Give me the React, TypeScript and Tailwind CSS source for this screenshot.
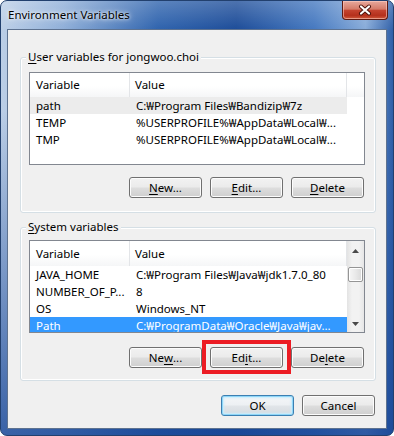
import React from 'react';

type Row = [string, string];

const userRows: Row[] = [
  ['path', 'C:₩Program Files₩Bandizip₩7z'],
  ['TEMP', '%USERPROFILE%₩AppData₩Local₩...'],
  ['TMP', '%USERPROFILE%₩AppData₩Local₩...'],
];

const systemRows: Row[] = [
  ['JAVA_HOME', 'C:₩Program Files₩Java₩jdk1.7.0_80'],
  ['NUMBER_OF_P...', '8'],
  ['OS', 'Windows_NT'],
  ['Path', 'C:₩ProgramData₩Oracle₩Java₩jav...'],
];

const Key = ({ children }: { children: React.ReactNode }) => (
  <span className="underline decoration-1 underline-offset-[2px]">{children}</span>
);

const WinButton = ({ children, primary = false }: { children: React.ReactNode; primary?: boolean }) => (
  <button
    type="button"
    className={
      primary
        ? 'flex h-[21px] w-[73px] items-center justify-center rounded-[3px] border border-[#3c7fb1] bg-[linear-gradient(#f4f6f8_0%,#edf0f3_48%,#e1e5e9_52%,#d6dbe0_100%)] leading-none text-black shadow-[inset_0_0_0_1px_#8ed6f8,inset_0_0_2px_2px_#c8ecfc]'
        : 'flex h-[21px] w-[73px] items-center justify-center rounded-[3px] border border-[#707070] bg-[linear-gradient(#f2f2f2_0%,#ebebeb_48%,#dddddd_52%,#cfcfcf_100%)] leading-none text-black shadow-[inset_0_0_0_1px_#fcfcfc]'
    }
  >
    {children}
  </button>
);

const Arrow = ({ down = false }: { down?: boolean }) => (
  <svg width="7" height="4" viewBox="0 0 7 4">
    <path d={down ? 'M0 0h7L3.5 4z' : 'M0 4h7L3.5 0z'} fill="#4a4a4a" />
  </svg>
);

const Scrollbar = () => (
  <div className="flex w-[17px] flex-col bg-[linear-gradient(to_right,#e3e3e3,#f2f2f2_30%,#f2f2f2_70%,#e6e6e6)]">
    <div className="flex h-[17px] items-center justify-center pt-[3px]">
      <Arrow />
    </div>
    <div className="flex-1 pt-[9px]">
      <div className="mx-[1px] h-[15px] rounded-[2px] border border-[#959595] bg-[linear-gradient(to_right,#f6f6f6,#e9e9e9_50%,#d9d9d9)] shadow-[inset_0_0_0_1px_#ffffff]" />
    </div>
    <div className="flex h-[17px] items-center justify-center">
      <Arrow down />
    </div>
  </div>
);

type ListProps = {
  rows: Row[];
  focused?: boolean;
  scroll?: boolean;
  selected: number;
};

const ListView = ({ rows, focused = false, scroll = false, selected }: ListProps) => (
  <div className="flex h-[93px] w-[336px] overflow-hidden border border-[#828790] bg-white">
    <div className="flex flex-1 flex-col">
      <div
        className={`flex shrink-0 bg-[linear-gradient(#ffffff_0%,#ffffff_55%,#f5f6f7_100%)] ${
          scroll ? 'h-[25px]' : 'h-[24px]'
        }`}
      >
        <div className="flex w-[100px] items-center border-r border-[#e3e5e8] pl-[6px]">Variable</div>
        <div className="flex w-[217px] items-center border-r border-[#e3e5e8] pl-[5px]">Value</div>
        {!scroll && <div className="flex-1" />}
      </div>
      {rows.map(([name, value], i) => {
        const sel = i === selected;
        return (
          <div
            key={name}
            className={`flex h-[17px] w-[317px] shrink-0 items-center whitespace-nowrap ${
              sel ? (focused ? 'bg-[#3399ff] text-white' : 'bg-[#ececec]') : ''
            }`}
          >
            <div className="w-[100px] overflow-hidden pl-[6px]">{name}</div>
            <div className="flex-1 overflow-hidden pl-[6px]">{value}</div>
          </div>
        );
      })}
    </div>
    {scroll && <Scrollbar />}
  </div>
);

const GroupBox = ({
  label,
  children,
  tall,
}: {
  label: React.ReactNode;
  children: React.ReactNode;
  tall?: boolean;
}) => (
  <div
    className={`relative ml-[12px] w-[356px] rounded-[3px] border border-[#d5dfe5] pl-[8px] shadow-[inset_0_0_0_1px_#ffffff] ${
      tall ? 'mt-[27px] h-[156px] pt-[14px]' : 'mt-[14px] h-[154px] pt-[12px]'
    }`}
  >
    <div className="absolute -top-[9px] left-[5px] h-[16px] bg-[#f0f0f0] px-[2px] leading-[16px]">{label}</div>
    {children}
  </div>
);

const CloseGlyph = () => (
  <svg width="14" height="12" viewBox="0 0 14 12">
    <path d="M3 2.5l8 7M11 2.5l-8 7" stroke="#4a1009" strokeWidth="4" strokeLinecap="round" />
    <path d="M3 2.5l8 7M11 2.5l-8 7" stroke="#ffffff" strokeWidth="2.2" strokeLinecap="round" />
  </svg>
);

export default function App() {
  return (
    <div className="h-[436px] w-[394px] overflow-hidden bg-white font-['Noto_Sans','Noto_Sans_CJK_KR',sans-serif] text-[11.5px] text-black">
      <div className="flex h-full w-full flex-col rounded-[7px] border border-[#22406e] bg-[linear-gradient(to_bottom,rgba(255,255,255,0.22)_0px,rgba(255,255,255,0)_30px,rgba(24,70,145,0)_110px,rgba(24,70,150,0.8)_100%),linear-gradient(to_right,#bccfe7_0%,#8eaed8_16%,#2d62ad_40%,#1b4b98_60%,#4478c0_80%,#87abd9_93%,#2f5fa8_100%)]">
        <div className="flex h-[28px] shrink-0 items-start justify-between">
          <div className="pl-[7px] pt-[6px] leading-[16px] [text-shadow:0_0_6px_rgba(255,255,255,0.95),0_0_3px_rgba(255,255,255,0.9)]">
            Environment Variables
          </div>
          <div className="mr-[5px] flex h-[19px] w-[46px] items-center justify-center rounded-b-[4px] border border-t-0 border-[#5e1a12] bg-[linear-gradient(#e8a99d_0%,#d57b69_45%,#c4432f_52%,#b5301c_80%,#cf5a3c_100%)] shadow-[inset_0_0_0_1px_rgba(255,210,200,0.55)]">
            <CloseGlyph />
          </div>
        </div>
        <div className="mx-[6px] mb-[6px] flex flex-1 flex-col border border-[#5d7290] bg-[#f0f0f0]">
          <GroupBox
            tall
            label={
              <>
                <Key>U</Key>ser variables for jongwoo.choi
              </>
            }
          >
            <ListView rows={userRows} selected={0} />
            <div className="mt-[12px] flex gap-[8px] pl-[100px]">
              <WinButton>
                <Key>N</Key>ew...
              </WinButton>
              <WinButton>
                <Key>E</Key>dit...
              </WinButton>
              <WinButton>
                <Key>D</Key>elete
              </WinButton>
            </div>
          </GroupBox>
          <GroupBox
            label={
              <>
                <Key>S</Key>ystem variables
              </>
            }
          >
            <ListView rows={systemRows} selected={3} focused scroll />
            <div className="mt-[14px] flex gap-[8px] pl-[100px]">
              <WinButton>
                Ne<Key>w</Key>...
              </WinButton>
              <span className="relative">
                <WinButton>
                  Ed<Key>i</Key>t...
                </WinButton>
                <span className="absolute -bottom-[6px] -left-[8px] -right-[8px] -top-[7px] border-4 border-[#ec1c24]" />
              </span>
              <WinButton>
                De<Key>l</Key>ete
              </WinButton>
            </div>
          </GroupBox>
          <div className="mt-[14px] flex justify-end gap-[8px] pr-[11px]">
            <WinButton primary>OK</WinButton>
            <WinButton>Cancel</WinButton>
          </div>
        </div>
      </div>
    </div>
  );
}
